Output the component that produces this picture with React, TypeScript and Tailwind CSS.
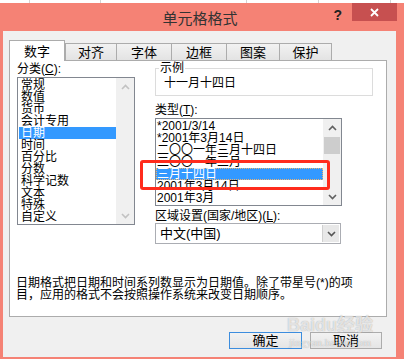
import React from "react";

function Chevron({ up, color }: { up?: boolean; color: string }) {
  return (
    <svg width="9" height="6" viewBox="0 0 9 6">
      <path
        d={up ? "M1 5 L4.5 1.5 L8 5" : "M1 1 L4.5 4.5 L8 1"}
        fill="none"
        stroke={color}
        strokeWidth="1.6"
      />
    </svg>
  );
}

export default function App() {
  const cats = ["常规", "数值", "货币", "会计专用", "日期", "时间", "百分比", "分数", "科学记数", "文本", "特殊", "自定义"];
  const types = ["*2001/3/14", "*2001年3月14日", "二〇〇一年三月十四日", "二〇〇一年三月", "三月十四日", "2001年3月14日", "2001年3月"];
  const tabs = [
    { t: "对齐", w: "w-[52px]", ml: "" },
    { t: "字体", w: "w-[56px]", ml: "-ml-px" },
    { t: "边框", w: "w-[56px]", ml: "-ml-px" },
    { t: "图案", w: "w-[54px]", ml: "-ml-px" },
    { t: "保护", w: "w-[53px]", ml: "-ml-px" },
  ];
  return (
    <div className="relative w-[404px] h-[359px] overflow-hidden bg-white text-black font-['Liberation_Sans','Noto_Sans_CJK_SC',sans-serif]">
      {/* spreadsheet strip behind */}
      <div className="flex h-[3px]">
        <div className="w-[30px] border-r border-[#D4D4D4]" />
        <div className="w-[71px] border-r border-[#D4D4D4]" />
        <div className="w-[146px] border-r border-[#D4D4D4]" />
        <div className="w-[72px] border-r border-[#D4D4D4]" />
        <div className="w-[72px] border-r border-[#D4D4D4]" />
      </div>

      {/* window */}
      <div className="flex flex-col h-[356px] bg-[#F58275] pl-[3px] pr-[8px] pb-[2px]">
        {/* title bar */}
        <div className="flex h-[28px]">
          <div className="flex-1" />
          <div className="pt-[1px] text-[15px] leading-[28px] text-[#333333] font-['Noto_Sans_CJK_SC',sans-serif]">单元格格式</div>
          <div className="flex-1 flex justify-end items-start -mr-px">
            <div className="mt-[4px] mr-[10px] text-[14px] leading-[16px] font-bold text-[#222]">?</div>
            <div className="w-[45px] h-[18px] bg-[#C75050] flex items-center justify-center">
              <svg width="9" height="9" viewBox="0 0 9 9">
                <path d="M1 1 L8 8 M8 1 L1 8" stroke="white" strokeWidth="1.8" />
              </svg>
            </div>
          </div>
        </div>

        {/* body */}
        <div className="flex-1 flex flex-col bg-[#F0F0F0] pl-[6px] pr-[9px] pt-[9px]">
          {/* tabs */}
          <div className="relative z-10 flex items-end h-[20px]">
            <div className="w-[56px] h-[21px] mb-[-1px] bg-white border border-b-0 border-[#ACACAC] flex items-center justify-center text-[13px] leading-[14px] font-['Noto_Sans_CJK_SC',sans-serif]">
              数字
            </div>
            {tabs.map((tb) => (
              <div
                key={tb.t}
                className={`${tb.w} ${tb.ml} h-[17px] bg-gradient-to-b from-[#F2F2F2] to-[#E3E3E3] border border-b-0 border-[#ACACAC] flex items-center justify-center text-[13px] leading-[14px] font-['Noto_Sans_CJK_SC',sans-serif]`}
              >
                {tb.t}
              </div>
            ))}
          </div>

          {/* panel */}
          <div className="h-[257px] bg-white border border-[#ACACAC] flex flex-col text-[12px]">
            <div className="flex pl-[7px] pt-[1px]">
              {/* left column */}
              <div className="w-[118px] flex flex-col">
                <div className="h-[15px] leading-[14px]">
                  分类(<span className="underline">C</span>):
                </div>
                <div className="h-[148px] border border-[#828790] flex">
                  <div className="flex-1 pt-[1px] pl-[1px] flex flex-col">
                    {cats.map((c) => (
                      <div
                        key={c}
                        className={`h-[12px] leading-[12px] pl-[2px] whitespace-nowrap ${c === "日期" ? "bg-[#3399FF] text-white" : ""}`}
                      >
                        {c}
                      </div>
                    ))}
                  </div>
                  <div className="w-[18px] bg-[#F0F0F0] flex flex-col justify-between">
                    <div className="h-[17px] flex items-center justify-center">
                      <Chevron up color="#C2C2C2" />
                    </div>
                    <div className="h-[17px] flex items-center justify-center">
                      <Chevron color="#C2C2C2" />
                    </div>
                  </div>
                </div>
              </div>

              {/* right column */}
              <div className="ml-[20px] flex flex-col">
                <div className="relative mt-[6px] w-[218px] h-[28px] border border-[#DCDCDC]">
                  <span className="absolute -top-[7px] left-[3px] bg-white px-[1px] leading-[12px]">示例</span>
                  <div className="pl-[8px] pt-[8px] leading-[12px]">十一月十四日</div>
                </div>
                <div className="mt-[7px] h-[15px] leading-[14px]">
                  类型(<span className="underline">T</span>):
                </div>
                <div className="w-[187px] h-[88px] border border-[#828790] flex">
                  <div className="flex-1 pt-[1px] flex flex-col">
                    {types.map((t) => (
                      <div
                        key={t}
                        className={`h-[12px] leading-[10px] whitespace-nowrap ${t === "三月十四日" ? "bg-[#3399FF] text-white border border-dotted border-[#F3B26A]" : "border border-transparent"}`}
                      >
                        {t}
                      </div>
                    ))}
                  </div>
                  <div className="w-[18px] bg-[#F0F0F0] flex flex-col">
                    <div className="h-[17px] flex items-center justify-center">
                      <Chevron up color="#606060" />
                    </div>
                    <div className="mt-[1px] mx-[1px] h-[17px] bg-[#CDCDCD]" />
                    <div className="flex-1" />
                    <div className="h-[17px] flex items-center justify-center">
                      <Chevron color="#606060" />
                    </div>
                  </div>
                </div>
                <div className="mt-[3px] h-[14px] leading-[14px] whitespace-nowrap">
                  区域设置(国家/地区)(<span className="underline">L</span>):
                </div>
                <div className="w-[186px] h-[21px] border border-[#ABADB3] flex">
                  <div className="flex-1 pl-[4px] text-[13px] leading-[19px]">中文(中国)</div>
                  <div className="w-[17px] my-px mr-px bg-[#E8E8E8] border-l border-[#D0D0D0] flex items-center justify-center">
                    <Chevron color="#555555" />
                  </div>
                </div>
              </div>
            </div>

            <div className="mt-auto pb-[15px] pl-[6px] leading-[12px] whitespace-nowrap">
              日期格式把日期和时间系列数显示为日期值。除了带星号(*)的项
              <br />
              目，应用的格式不会按照操作系统来改变日期顺序。
            </div>
          </div>

          {/* buttons */}
          <div className="mt-[15px] flex justify-end gap-[8px] pr-[5px]">
            <div className="w-[73px] h-[17px] border border-[#3C8DDE] bg-gradient-to-b from-[#F2F2F2] to-[#E5E5E5] flex items-center justify-center text-[13px] leading-[14px]">
              确定
            </div>
            <div className="w-[72px] h-[17px] border border-[#ACACAC] bg-gradient-to-b from-[#F2F2F2] to-[#E5E5E5] flex items-center justify-center text-[13px] leading-[14px]">
              取消
            </div>
          </div>
        </div>
      </div>

      {/* watermark */}
      <div className="absolute left-[287px] top-[314px] flex flex-col items-center text-white/70 [text-shadow:0_0_1px_rgba(0,0,0,0.35)] pointer-events-none">
        <div className="text-[18px] leading-[18px] font-bold font-['Liberation_Sans',sans-serif]">
          Baidu<span className="font-['Noto_Sans_CJK_SC',sans-serif]">经验</span>
        </div>
        <div className="text-[11px] leading-[12px] mt-[2px] font-['Liberation_Serif',serif]">jingyan.baidu.com</div>
      </div>

      {/* red annotation */}
      <div className="absolute left-[140px] top-[160px] w-[190px] h-[30px] border-[3px] border-[#FF2B1C] rounded-[3px] pointer-events-none" />
    </div>
  );
}
